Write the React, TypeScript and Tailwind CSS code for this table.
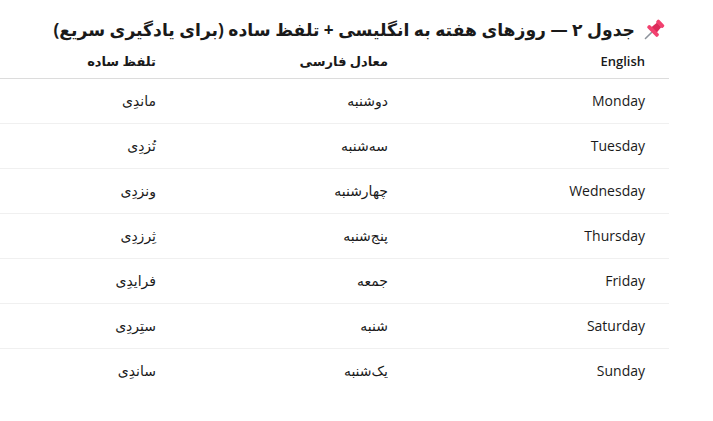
const rows = [
  { en: 'Monday', fa: 'دوشنبه', say: 'ماندِی' },
  { en: 'Tuesday', fa: 'سه‌شنبه', say: 'تُزدِی' },
  { en: 'Wednesday', fa: 'چهارشنبه', say: 'ونزدِی' },
  { en: 'Thursday', fa: 'پنج‌شنبه', say: 'ثِرزدِی' },
  { en: 'Friday', fa: 'جمعه', say: 'فرایدِی' },
  { en: 'Saturday', fa: 'شنبه', say: 'ستِردِی' },
  { en: 'Sunday', fa: 'یک‌شنبه', say: 'ساندِی' },
];

function Pin() {
  return (
    <svg width="22" height="22" viewBox="0 0 20 20" className="shrink-0">
      <g transform="rotate(45 10 10)">
        {/* needle */}
        <path d="M10 12.5 V21" stroke="#8d939c" strokeWidth="1.4" strokeLinecap="round" />
        {/* cap */}
        <rect x="5.8" y="0.2" width="8.4" height="3.6" rx="1.3" fill="#f2416f" />
        {/* body */}
        <path d="M7.2 3.6 H12.8 L13.4 10 H6.6 Z" fill="#dc2a5a" />
        {/* base */}
        <rect x="3.4" y="9.4" width="13.2" height="3.6" rx="1.5" fill="#f2416f" />
      </g>
    </svg>
  );
}

export default function App() {
  return (
    <div
      dir="rtl"
      className="w-[669px] bg-white text-[#1a1a1a] text-[14px] leading-5"
      style={{ fontFamily: '"Open Sans", "DejaVu Sans", sans-serif' }}
    >
      <h2 className="flex items-center gap-[8px] pr-1 pt-[16px] text-[17.2px] leading-[27px] font-bold whitespace-nowrap">
        <Pin />
        <span>جدول ۲ — روزهای هفته به انگلیسی + تلفظ ساده (برای یادگیری سریع)</span>
      </h2>
      <table className="w-full border-collapse text-right">
        <thead>
          <tr className="border-b border-[#dcdcdc] text-[13px]">
            <th className="w-[257px] pr-6 pt-[8px] pb-[7px] font-semibold">English</th>
            <th className="w-[232px] pr-6 pt-[8px] pb-[7px] font-semibold">معادل فارسی</th>
            <th className="pr-6 pt-[8px] pb-[7px] font-semibold">تلفظ ساده</th>
          </tr>
        </thead>
        <tbody>
          {rows.map((r, i) => (
            <tr key={r.en} className={i < rows.length - 1 ? 'border-b border-[#f0f0f0]' : ''}>
              <td className="pr-6 py-3">{r.en}</td>
              <td className="pr-6 py-3">{r.fa}</td>
              <td className="pr-6 py-3">{r.say}</td>
            </tr>
          ))}
        </tbody>
      </table>
    </div>
  );
}
